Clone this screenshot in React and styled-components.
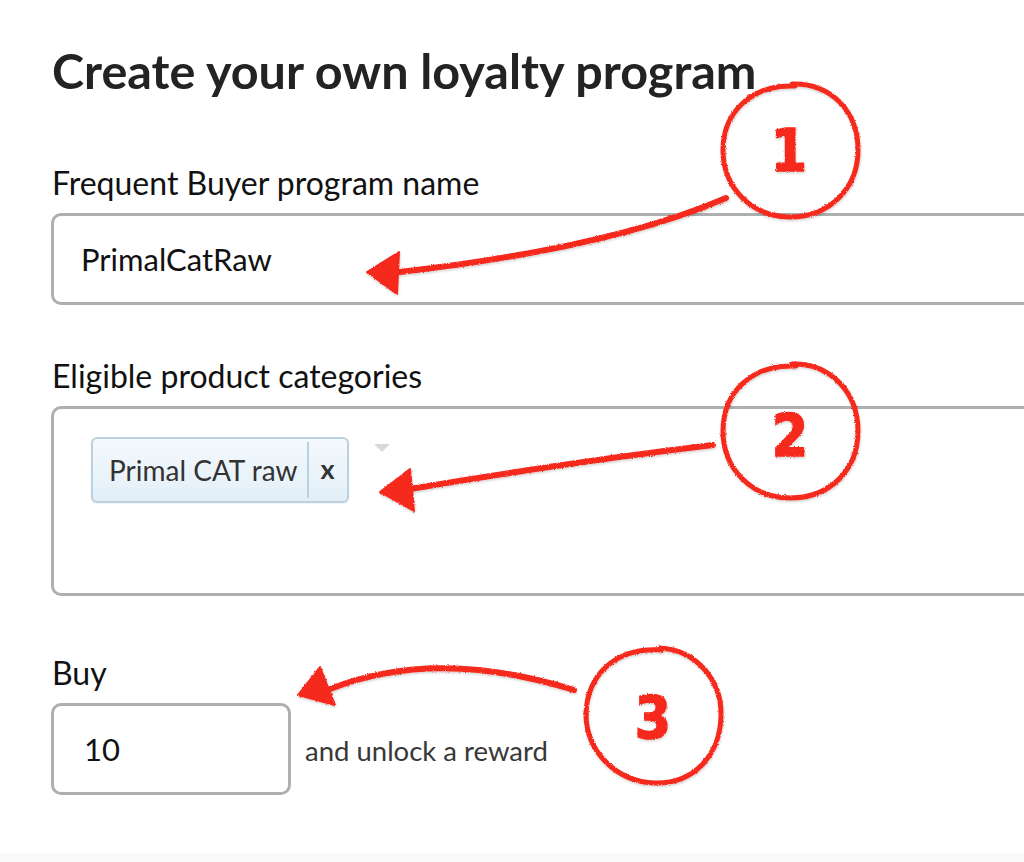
import React from "react";
import styled, { createGlobalStyle } from "styled-components";

const GlobalStyle = createGlobalStyle`
  html, body {
    margin: 0;
    padding: 0;
    background: #ffffff;
    overflow: hidden;
  }
  body {
    font-family: Lato, "Open Sans", "Liberation Sans", sans-serif;
    color: #111;
  }
`;

const Page = styled.div`
  position: relative;
  width: 1024px;
  height: 862px;
  display: flex;
  flex-direction: column;
  padding-left: 51px;
  box-sizing: border-box;
  overflow: hidden;
`;

const Title = styled.h1`
  margin: 41px 0 0 1px;
  font-size: 48.5px;
  line-height: 58px;
  font-weight: 700;
  color: #232323;
  white-space: nowrap;
`;

const Field = styled.div`
  display: flex;
  flex-direction: column;
  margin-top: ${(p) => p.$gap}px;
`;

const Label = styled.label`
  font-size: 32px;
  line-height: 36px;
  color: #111;
  margin: 0 0 12px 1px;
  white-space: nowrap;
`;

const TextBox = styled.div`
  box-sizing: border-box;
  width: ${(p) => p.$width || 1010}px;
  height: 92px;
  border: 3px solid #adb0b0;
  border-radius: 10px;
  padding-left: ${(p) => p.$pad || 27}px;
  display: flex;
  align-items: center;
  font-size: 31px;
  color: #111;
  background: #fff;
`;

const MultiBox = styled.div`
  box-sizing: border-box;
  width: 1010px;
  height: 190px;
  border: 3px solid #adb0b0;
  border-radius: 10px;
  padding: 28px 0 0 37px;
  display: flex;
  align-items: flex-start;
`;

const Tag = styled.div`
  box-sizing: border-box;
  height: 66px;
  display: inline-flex;
  align-items: stretch;
  border: 2px solid #b9d1e1;
  border-radius: 6px;
  background: linear-gradient(#f4f9fd, #e2eff8);
  box-shadow: 0 1px 2px rgba(0, 0, 0, 0.06);
`;

const TagLabel = styled.span`
  display: flex;
  align-items: center;
  padding: 0 9px 0 16px;
  font-size: 28px;
  color: #333;
`;

const TagRemove = styled.span`
  display: flex;
  align-items: center;
  justify-content: center;
  width: 38px;
  border-left: 2px solid #b9d1e1;
  margin: 3px 0;
  font-weight: 700;
  font-size: 27px;
  padding-bottom: 3px;
  color: #333;
`;

const Caret = styled.span`
  width: 0;
  height: 0;
  margin: 7px 0 0 25px;
  border-left: 8px solid transparent;
  border-right: 8px solid transparent;
  border-top: 8px solid #d9d9d9;
`;

const BuyRow = styled.div`
  display: flex;
  align-items: center;
  gap: 14px;
`;

const Hint = styled.span`
  font-size: 27.5px;
  color: #383838;
  padding-top: 2px;
`;

const Footer = styled.div`
  margin: auto 0 0 -51px;
  height: 9px;
  background: #fafafa;
`;

const Overlay = styled.svg`
  position: absolute;
  left: 0;
  top: 0;
  width: 1024px;
  height: 862px;
  pointer-events: none;
`;

const RED = "#f6291c";

function Annotations() {
  return (
    <Overlay viewBox="0 0 1024 862">
      <defs>
        <filter id="crayon" x="-10%" y="-10%" width="120%" height="120%">
          <feTurbulence type="fractalNoise" baseFrequency="0.9" numOctaves="2" seed="3" result="n" />
          <feDisplacementMap in="SourceGraphic" in2="n" scale="2.5" xChannelSelector="R" yChannelSelector="G" result="d" />
          <feDropShadow dx="0.5" dy="1.5" stdDeviation="1" floodColor="#000" floodOpacity="0.18" />
        </filter>
      </defs>
      <g filter="url(#crayon)" fill="none" stroke={RED} strokeLinecap="round" strokeLinejoin="round">
        <path strokeWidth="5" d="M792 84 C832 83 858 112 858 150 C858 188 830 217 790 217 C752 217 723 188 723 150 C723 112 752 84 795 86" />
        <path strokeWidth="6" d="M726 198 Q 610 248 400 272" />
        <path strokeWidth="5" d="M792 364 C832 363 858 394 858 431 C858 470 830 498 790 498 C752 498 723 469 723 431 C723 392 752 364 796 366" />
        <path strokeWidth="6" d="M713 445 Q 570 462 410 489" />
        <path strokeWidth="5" d="M660 648 C696 650 722 680 721 716 C720 755 694 784 655 783 C617 782 586 752 586 714 C587 676 614 647 662 650" />
        <path strokeWidth="6" d="M574 690 Q 436 647 330 689" />
      </g>
      <g filter="url(#crayon)" fill={RED} stroke={RED} strokeWidth="2" strokeLinejoin="round">
        <polygon points="367,272 399,252 397,294" />
        <polygon points="380,492 410,469 414,511" />
        <polygon points="298,695 320,667 335,705" />
      </g>
      <g filter="url(#crayon)" fill={RED} stroke={RED} strokeWidth="1.5" fontFamily="'Liberation Sans Narrow', 'DejaVu Sans Condensed', sans-serif" fontWeight="700" fontSize="58" textAnchor="middle">
        <text x="789" y="171">1</text>
        <text x="790" y="456">2</text>
        <text x="653" y="738">3</text>
      </g>
    </Overlay>
  );
}

export default function App() {
  return (
    <>
      <GlobalStyle />
      <Page>
        <Title>Create your own loyalty program</Title>

        <Field $gap={66}>
          <Label>Frequent Buyer program name</Label>
          <TextBox>PrimalCatRaw</TextBox>
        </Field>

        <Field $gap={53}>
          <Label>Eligible product categories</Label>
          <MultiBox>
            <Tag>
              <TagLabel>Primal CAT raw</TagLabel>
              <TagRemove>x</TagRemove>
            </Tag>
            <Caret />
          </MultiBox>
        </Field>

        <Field $gap={59}>
          <Label>Buy</Label>
          <BuyRow>
            <TextBox $width={240} $pad={30}>10</TextBox>
            <Hint>and unlock a reward</Hint>
          </BuyRow>
        </Field>

        <Footer />
        <Annotations />
      </Page>
    </>
  );
}
